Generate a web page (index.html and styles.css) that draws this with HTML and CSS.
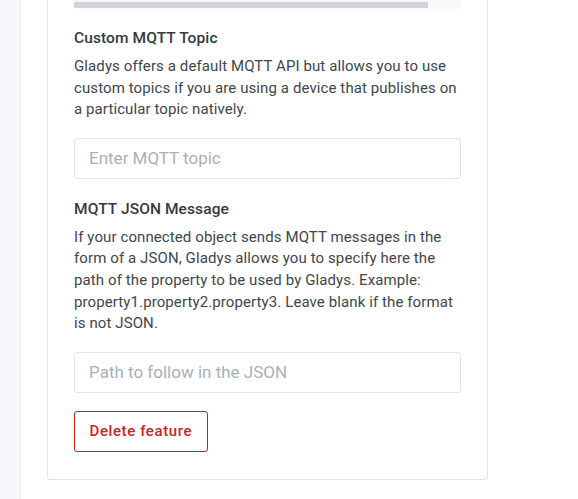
FILE: index.html
```html
<!DOCTYPE html>
<html>
<head>
<meta charset="utf-8">
<link rel="stylesheet" href="styles.css">
</head>
<body>
<div class="layout">
  <aside class="rail"></aside>
  <main class="content">
    <section class="card">
      <div class="track"><div class="track-fill"></div></div>
      <h3 class="label">Custom MQTT Topic</h3>
      <p class="help">Gladys offers a default MQTT API but allows you to use custom topics if you are using a device that publishes on a particular topic natively.</p>
      <input class="field" type="text" placeholder="Enter MQTT topic">
      <h3 class="label label-second">MQTT JSON Message</h3>
      <p class="help">If your connected object sends MQTT messages in the form of a JSON, Gladys allows you to specify here the path of the property to be used by Gladys. Example: property1.property2.property3. Leave blank if the format is not JSON.</p>
      <input class="field" type="text" placeholder="Path to follow in the JSON">
      <div class="actions"><button class="btn-danger" type="button">Delete feature</button></div>
    </section>
  </main>
</div>
</body>
</html>
```
FILE: styles.css
```css
* { box-sizing: border-box; }
html, body { margin: 0; padding: 0; background: #fff; }
body {
  font-family: Roboto, "Liberation Sans", sans-serif;
  color: #343a40;
  font-size: 15px;
  line-height: 21.6px;
  height: 499px;
  overflow: hidden;
}
.layout { display: flex; min-height: 499px; }
.rail {
  width: 21px;
  flex: none;
  background: #f5f7fb;
  border-right: 1px solid #e9ecf2;
}
.content { padding-left: 26px; }
.card {
  width: 441px;
  border: 1px solid #e0e5ec;
  border-top: 0;
  border-radius: 0 0 3px 3px;
  padding: 0 26px 27px;
}
.track {
  height: 9px;
  background: #f7f8fa;
  border-radius: 0 0 4px 4px;
  padding-top: 2px;
}
.track-fill {
  width: 354px;
  height: 6px;
  background: #cfd3da;
}
.label {
  margin: 18px 0 0;
  font-size: 15.5px;
  font-weight: 500;
  line-height: 22px;
  color: #343a40;
  letter-spacing: 0.1px;
}
.label-second { margin-top: 19px; }
.help {
  margin: 7px 0 0;
  color: #40464c;
  letter-spacing: 0.1px;
}
.field {
  display: block;
  width: 100%;
  height: 41px;
  margin-top: 17px;
  padding: 0 14px;
  border: 1px solid #e0e5ec;
  border-radius: 3px;
  font-family: inherit;
  font-size: 17px;
  color: #495057;
  background: #fff;
  outline: none;
}
.field::placeholder { color: #a9afb8; }
.actions { margin-top: 18px; display: flex; }
.btn-danger {
  height: 41px;
  padding: 0 14.5px;
  border: 1px solid #cd201f;
  border-radius: 3px;
  background: #fff;
  color: #cd201f;
  font-family: inherit;
  font-size: 15px;
  font-weight: 500;
  letter-spacing: 0.6px;
}
```
